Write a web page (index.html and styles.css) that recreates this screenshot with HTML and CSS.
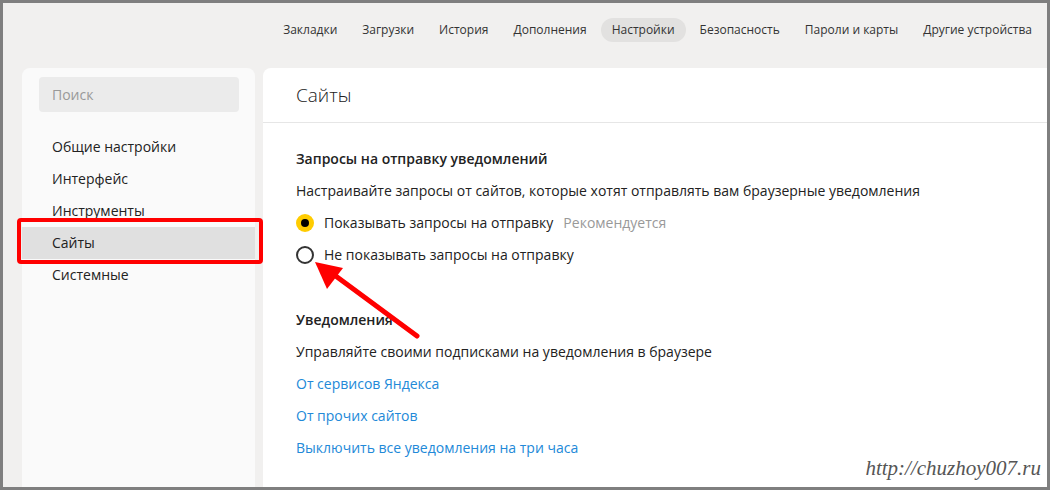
FILE: index.html
```html
<!DOCTYPE html>
<html lang="ru">
<head>
    <meta charset="UTF-8">
    <title>Настройки — Сайты</title>
    <link rel="stylesheet" href="styles.css">
</head>
<body>
    <div class="frame">
        <nav class="topnav">
            <a class="nav-item">Закладки</a>
            <a class="nav-item">Загрузки</a>
            <a class="nav-item">История</a>
            <a class="nav-item">Дополнения</a>
            <a class="nav-item active">Настройки</a>
            <a class="nav-item">Безопасность</a>
            <a class="nav-item">Пароли и карты</a>
            <a class="nav-item">Другие устройства</a>
        </nav>

        <div class="layout">
            <aside class="sidebar">
                <div class="search">Поиск</div>
                <ul class="menu">
                    <li>Общие настройки</li>
                    <li>Интерфейс</li>
                    <li>Инструменты</li>
                    <li class="current">Сайты</li>
                    <li>Системные</li>
                </ul>
            </aside>

            <main class="content">
                <div class="page-title">Сайты</div>

                <section class="block">
                    <div class="row heading">Запросы на отправку уведомлений</div>
                    <div class="row">Настраивайте запросы от сайтов, которые хотят отправлять вам браузерные уведомления</div>
                    <div class="row radio">
                        <span class="dot checked"></span>
                        Показывать запросы на отправку
                        <span class="hint">Рекомендуется</span>
                    </div>
                    <div class="row radio">
                        <span class="dot"></span>
                        Не показывать запросы на отправку
                    </div>
                </section>

                <section class="block second">
                    <div class="row heading">Уведомления</div>
                    <div class="row">Управляйте своими подписками на уведомления в браузере</div>
                    <div class="row"><a class="link">От сервисов Яндекса</a></div>
                    <div class="row"><a class="link">От прочих сайтов</a></div>
                    <div class="row"><a class="link">Выключить все уведомления на три часа</a></div>
                </section>
            </main>
        </div>

        <!-- пометки поверх скриншота -->
        <div class="red-box"></div>
        <svg class="arrow" width="1044" height="484" viewBox="0 0 1044 484">
            <line x1="414" y1="333" x2="330" y2="271" stroke="#ff0000" stroke-width="5" stroke-linecap="round"/>
            <polygon points="312,259 340,265 324,286" fill="#ff0000"/>
        </svg>
        <div class="watermark">http://chuzhoy007.ru</div>
    </div>
</body>
</html>
```

FILE: styles.css
```css
* {
    margin: 0;
    padding: 0;
    box-sizing: border-box;
}

body {
    font-family: 'Open Sans', 'Noto Sans', sans-serif;
    font-size: 14px;
    color: #222;
    width: 1050px;
    height: 490px;
    overflow: hidden;
}

.frame {
    position: relative;
    width: 1050px;
    height: 490px;
    border: 3px solid #7f7f7f;
    background: #f1f0ef;
    overflow: hidden;
}

.topnav {
    height: 54px;
    display: flex;
    align-items: center;
    justify-content: flex-end;
    padding-right: 4px;
    gap: 3px;
}

.nav-item {
    font-size: 12px;
    color: #333;
    padding: 3px 11px;
    height: 24px;
    line-height: 18px;
    border-radius: 12px;
}

.nav-item.active {
    background: #e2e1e0;
}

.layout {
    display: flex;
    gap: 8px;
    margin-top: 11px;
    padding-left: 19px;
    height: 420px;
}

.sidebar {
    width: 233px;
    flex-shrink: 0;
    background: #fafafa;
    border-radius: 8px 8px 0 0;
    padding-top: 9px;
}

.search {
    margin-left: 17px;
    width: 200px;
    height: 35px;
    background: #ebebeb;
    border-radius: 4px;
    padding-left: 13px;
    line-height: 36px;
    color: #999;
    font-size: 14px;
}

.menu {
    list-style: none;
    margin-top: 19px;
}

.menu li {
    height: 32px;
    line-height: 32px;
    padding-left: 30px;
    color: #222;
}

.menu li.current {
    background: #e0e0e0;
}

.content {
    flex: 1;
    background: #fff;
    border-radius: 8px 0 0 0;
}

.page-title {
    height: 55px;
    line-height: 55px;
    padding-left: 33px;
    font-size: 19px;
    font-weight: 300;
    border-bottom: 1px solid #e6e6e6;
}

.block {
    padding-left: 33px;
    padding-top: 20px;
}

.block.second {
    padding-top: 33px;
}

.row {
    height: 32px;
    line-height: 32px;
    white-space: nowrap;
}

.heading {
    font-weight: 600;
}

.radio {
    display: flex;
    align-items: center;
}

.dot {
    width: 18px;
    height: 18px;
    border-radius: 50%;
    border: 2px solid #333;
    margin-right: 10px;
    position: relative;
}

.dot.checked {
    border: none;
    background: #ffcc00;
}

.dot.checked::after {
    content: "";
    position: absolute;
    left: 5px;
    top: 5px;
    width: 8px;
    height: 8px;
    border-radius: 50%;
    background: #000;
}

.hint {
    color: #999;
    margin-left: 10px;
}

.link {
    color: #2289d8;
}

.red-box {
    position: absolute;
    left: 14px;
    top: 215px;
    width: 246px;
    height: 46px;
    border: 4px solid #ff0000;
    border-radius: 4px;
}

.arrow {
    position: absolute;
    left: 0;
    top: 0;
}

.watermark {
    position: absolute;
    right: 6px;
    bottom: 6px;
    font-family: 'Liberation Serif', serif;
    font-style: italic;
    font-size: 21px;
    color: #555;
}
```
